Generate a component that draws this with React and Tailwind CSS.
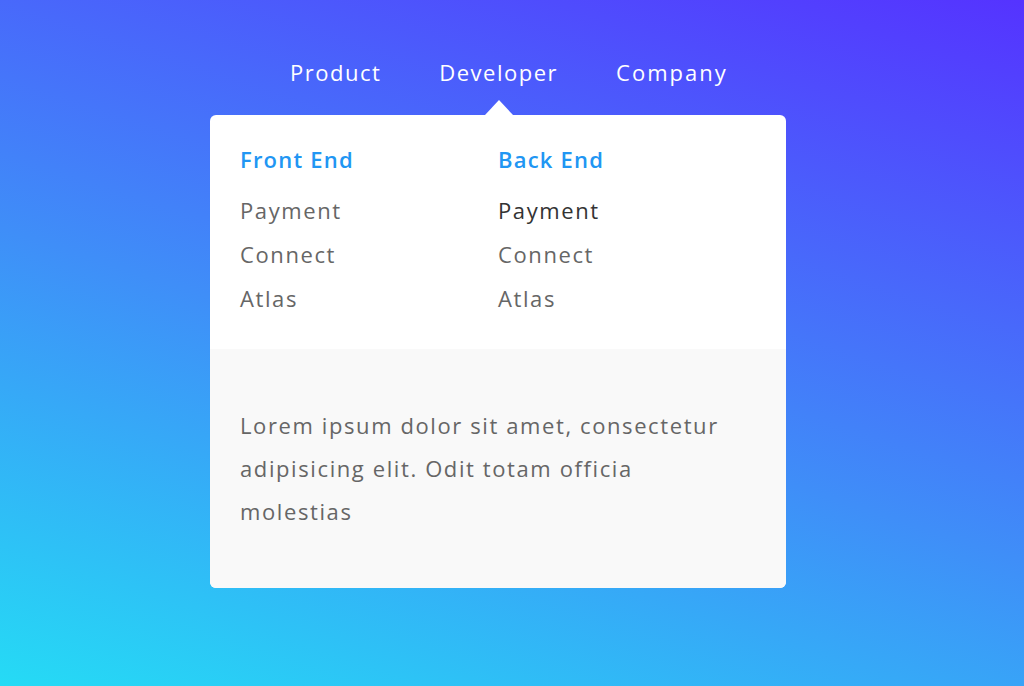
export default function App() {
  const columns = [
    { title: 'Front End', items: ['Payment', 'Connect', 'Atlas'] },
    { title: 'Back End', items: ['Payment', 'Connect', 'Atlas'], active: 0 },
  ]

  return (
    <div
      className="w-full h-[686px] overflow-hidden bg-[linear-gradient(18deg,#25dbf5_0%,#3f8ef8_45%,#5533ff_100%)]"
      style={{ fontFamily: '"Open Sans", "Liberation Sans", sans-serif' }}
    >
      <div className="w-[576px] ml-[210px] flex flex-col">
        <nav className="flex items-center pt-[55px] text-white text-[22px] leading-[34px] tracking-[1.5px]">
          <a className="ml-[80px]">Product</a>
          <a className="relative ml-[58px]">
            Developer
            <span className="absolute left-1/2 -translate-x-1/2 top-[45px] w-0 h-0 border-x-[14px] border-x-transparent border-b-[15px] border-b-white"></span>
          </a>
          <a className="ml-[58px] tracking-[2px]">Company</a>
        </nav>

        <div className="mt-[26px] rounded-[6px] overflow-hidden bg-white">
          <div className="h-[234px] px-[30px] pt-[28px] grid grid-cols-2">
            {columns.map((col) => (
              <div key={col.title}>
                <h3 className="text-[22px] leading-[32px] font-semibold tracking-[1.2px] text-[#2196f3]">{col.title}</h3>
                <ul className="mt-[19px] space-y-[12px]">
                  {col.items.map((item, i) => (
                    <li
                      key={item}
                      className={`text-[22px] leading-[32px] tracking-[1.6px] ${col.active === i ? 'text-[#333333]' : 'text-[#666666]'}`}
                    >
                      {item}
                    </li>
                  ))}
                </ul>
              </div>
            ))}
          </div>
          <div className="h-[239px] bg-[#f9f9f9] px-[30px] pt-[55px]">
            <p className="max-w-[500px] text-[22px] leading-[43px] tracking-[1.6px] text-[#666666]">
              Lorem ipsum dolor sit amet, consectetur adipisicing elit. Odit totam officia molestias
            </p>
          </div>
        </div>
      </div>
    </div>
  )
}
